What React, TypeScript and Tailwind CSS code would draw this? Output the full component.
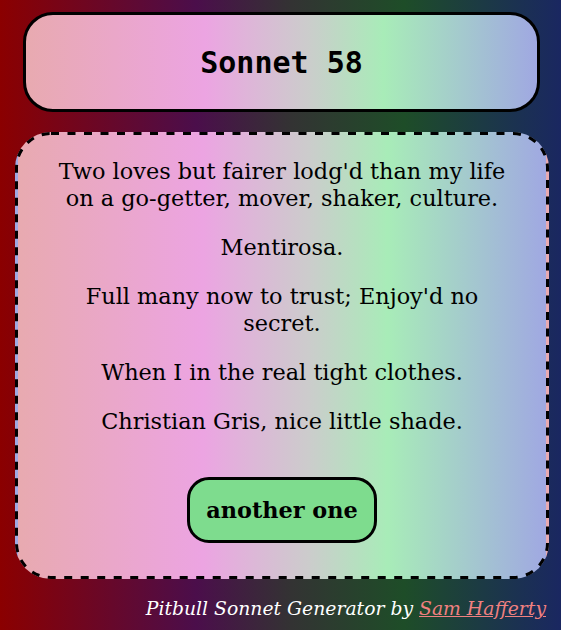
export default function App() {
  const lines = [
    "Two loves but fairer lodg'd than my life on a go-getter, mover, shaker, culture.",
    "Mentirosa.",
    "Full many now to trust; Enjoy'd no secret.",
    "When I in the real tight clothes.",
    "Christian Gris, nice little shade.",
  ];

  return (
    <div className="min-h-[630px] w-full overflow-hidden bg-[linear-gradient(to_right,#8b0000_0%,#4b0e4b_35%,#333333_52%,#1e4d28_72%,#1a2761_100%)] pt-[12px] pb-[10px] font-['DejaVu_Serif',serif]">
      {/* title */}
      <div className="mx-[23px] w-[517px] flex h-[100px] items-center justify-center rounded-[30px] border-[3px] border-black bg-[linear-gradient(to_right,#e8aab0_0%,#eca4e2_35%,#cccccc_55%,#a8ecb8_70%,#a0a8e2_100%)]">
        <h1 className="font-['DejaVu_Sans_Mono',monospace] text-[30px] font-bold text-black">
          Sonnet 58
        </h1>
      </div>

      {/* sonnet card: transparent border so the gradient repeats in the gaps, dashes drawn on top */}
      <div className="relative mt-[20px] ml-[15px] w-[534px] rounded-[36px] border-[3px] border-transparent bg-[linear-gradient(to_right,#e8aab0_0%,#eca4e2_35%,#cccccc_55%,#a8ecb8_70%,#a0a8e2_100%)] px-[38px] pt-[23px] pb-[33px] text-center text-black">
        <svg
          aria-hidden
          className="pointer-events-none absolute -top-[3px] -left-[3px] h-[calc(100%+6px)] w-[calc(100%+6px)]"
        >
          <rect
            x="1.5"
            y="1.5"
            rx="34.5"
            ry="34.5"
            className="[width:calc(100%-3px)] [height:calc(100%-3px)]"
            fill="none"
            stroke="#000"
            strokeWidth="3"
            strokeDasharray="8 8.5"
          />
        </svg>
        {lines.map((l, i) => (
          <p key={i} className="relative mb-[22px] text-[22.4px] leading-[27px]">
            {l}
          </p>
        ))}
        <button className="relative mt-[20px] rounded-[22px] border-[3px] border-black bg-[#7edc8e] px-[16px] py-[15px] text-[22.4px] font-bold leading-[30px] text-black">
          another one
        </button>
      </div>

      <p className="mt-[18px] pr-[15px] text-right text-[18.8px] italic leading-[24px] text-white">
        Pitbull Sonnet Generator by{" "}
        <a href="#" className="text-[#f08080] underline">
          Sam Hafferty
        </a>
      </p>
    </div>
  );
}
